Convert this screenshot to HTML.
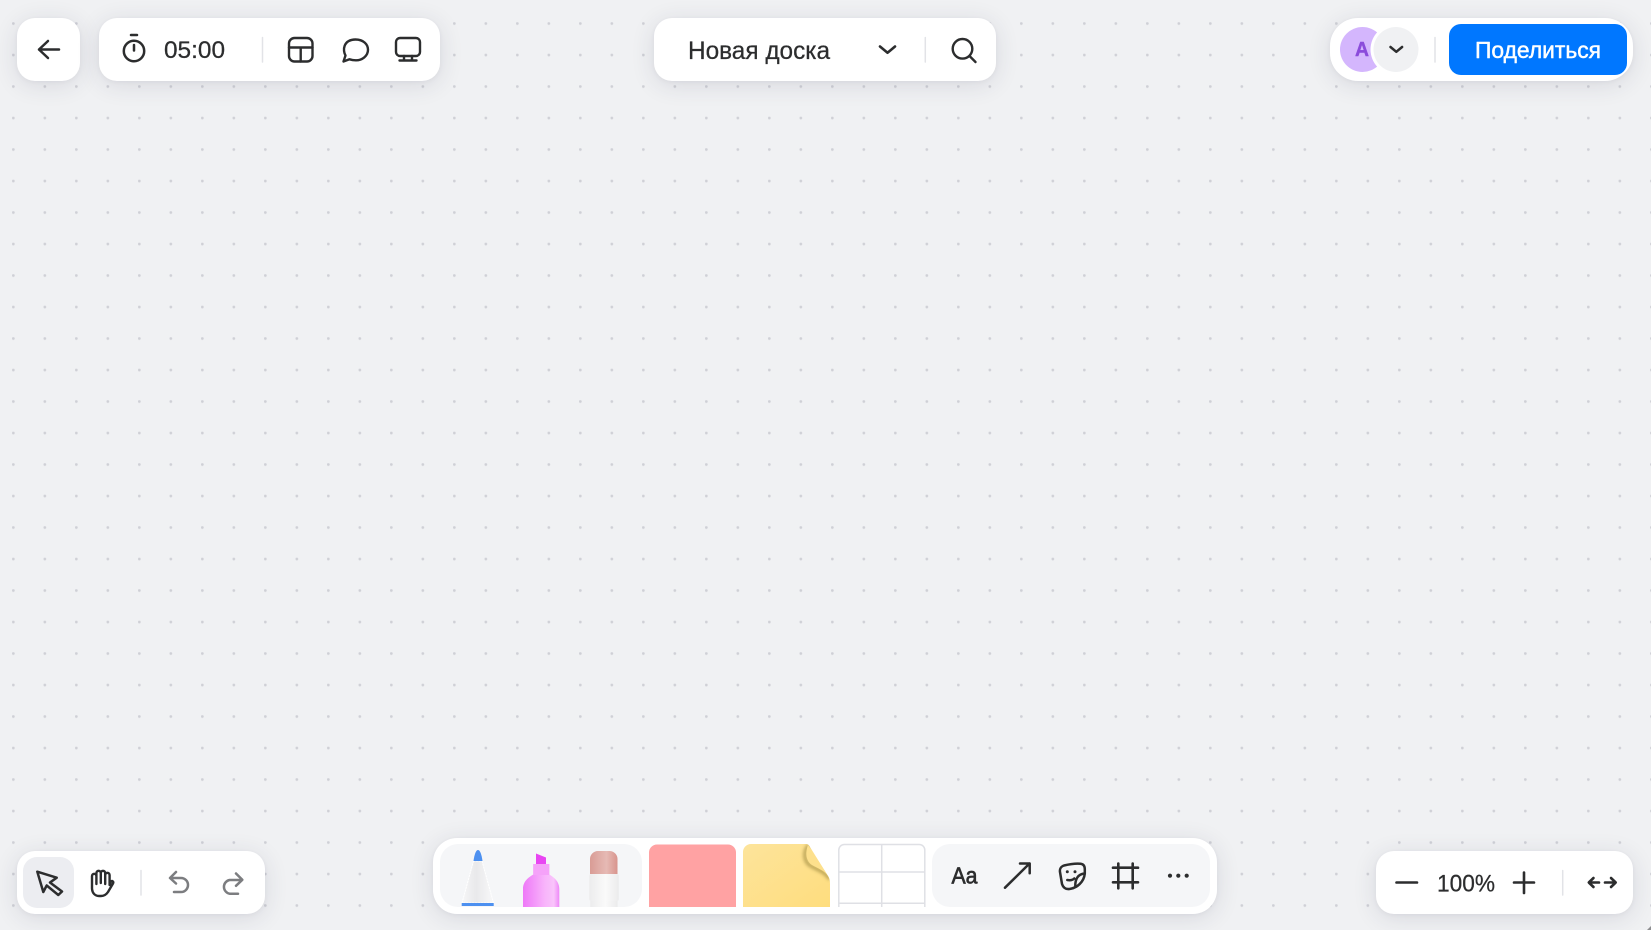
<!DOCTYPE html>
<html lang="ru">
<head>
<meta charset="utf-8">
<title>Новая доска</title>
<style>
html,body{margin:0;padding:0;width:1651px;height:930px;overflow:hidden;background:#f0f1f3;}
.dots{position:absolute;left:0;top:0;width:1651px;height:930px;
background-image:radial-gradient(circle at 1.3px 1.3px,#cfd0d6 0,#cfd0d6 1px,rgba(207,208,214,0) 1.8px);
background-size:31.5px 31.5px;background-position:12px 22.2px;}
.p{position:absolute;background:#fff;box-shadow:0 4px 24px rgba(40,45,75,.12),0 1px 4px rgba(40,45,75,.05);}
svg{position:absolute;left:0;top:0;}
text{font-family:"Liberation Sans",sans-serif;fill:#2c2d2e;stroke:#2c2d2e;stroke-width:.25;}
</style>
</head>
<body>
<div class="dots"></div>
<div class="p" style="left:17px;top:18px;width:63px;height:63px;border-radius:18px"></div>
<div class="p" style="left:99px;top:18px;width:341px;height:63px;border-radius:18px"></div>
<div class="p" style="left:654px;top:18px;width:342px;height:63px;border-radius:18px"></div>
<div class="p" style="left:1330px;top:18px;width:303px;height:63px;border-radius:28px"></div>
<div class="p" style="left:17px;top:851px;width:248px;height:63px;border-radius:18px"></div>
<div class="p" style="left:433px;top:838px;width:784px;height:76px;border-radius:24px"></div>
<div class="p" style="left:1376px;top:851px;width:257px;height:63px;border-radius:18px"></div>
<svg width="1651" height="930" viewBox="0 0 1651 930" xmlns="http://www.w3.org/2000/svg" fill="none" stroke-linecap="round" stroke-linejoin="round">
<defs>
<linearGradient id="cone" x1="0" x2="1" y1="0" y2="0"><stop offset="0" stop-color="#f6f6f7"/><stop offset=".45" stop-color="#e9e9eb"/><stop offset="1" stop-color="#f8f8f9"/></linearGradient>
<linearGradient id="hl" x1="0" x2="1" y1="0" y2="0"><stop offset="0" stop-color="#ee78f8"/><stop offset=".6" stop-color="#f8b4fb"/><stop offset=".85" stop-color="#f9c4fb"/><stop offset="1" stop-color="#ef88f8"/></linearGradient>
<linearGradient id="er" x1="0" x2="1" y1="0" y2="0"><stop offset="0" stop-color="#d99c95"/><stop offset=".6" stop-color="#e6bab5"/><stop offset="1" stop-color="#d8948d"/></linearGradient>
<linearGradient id="wh" x1="0" x2="1" y1="0" y2="0"><stop offset="0" stop-color="#ececed"/><stop offset=".55" stop-color="#fafafa"/><stop offset="1" stop-color="#ebebec"/></linearGradient>
<linearGradient id="ye" x1="0" x2="1" y1="0" y2="1"><stop offset="0" stop-color="#fde49b"/><stop offset="1" stop-color="#fedd7e"/></linearGradient>
<filter id="b" x="-50%" y="-50%" width="200%" height="200%"><feGaussianBlur stdDeviation="1.600"/></filter>
<clipPath id="yc"><path d="M743 907V852a8 8 0 0 1 8-8h55c2 0 3 1 4 3l18 29c1.500 2.500 2 4 2 8v23z"/></clipPath>
</defs>

<!-- back -->
<path d="M59 49.500H39M48 41l-9 8.500 9 8.500" stroke="#2c2d2e" stroke-width="2.500"/>

<!-- timer -->
<g stroke="#2c2d2e" stroke-width="2.500">
<circle cx="134" cy="51" r="10.200"/>
<path d="M131 35h6M134 45v5.500"/>
</g>
<text x="164" y="58" font-size="24" textLength="61" lengthAdjust="spacingAndGlyphs">05:00</text>
<path d="M262.500 37.500v24.500" stroke="#e2e3e7" stroke-width="1.500"/>
<g stroke="#2c2d2e" stroke-width="2.400">
<rect x="289" y="38" width="23.500" height="23.500" rx="5.500"/>
<path d="M289 47.500h23.500M300.700 47.500v14"/>
<path d="M343.500 61.500l2-6c-3-5-2.500-15.800 10-16 8 0 12.500 4.800 12.500 10.300 0 6.300-6 10.500-12 10.500-3 0-5-.5-6.500-1z"/>
<rect x="396" y="38" width="24" height="18" rx="4"/>
<path d="M404 56v4.300M412 56v4.300M399.500 60.500h17"/>
</g>

<!-- title -->
<text x="688" y="59" font-size="25" textLength="142" lengthAdjust="spacingAndGlyphs">Новая доска</text>
<path d="M880 46.500l7.500 6.300 7.500-6.300" stroke="#2c2d2e" stroke-width="2.600"/>
<path d="M925.300 37.500v24.500" stroke="#e2e3e7" stroke-width="1.500"/>
<g stroke="#2c2d2e" stroke-width="2.400">
<circle cx="962.500" cy="48.800" r="9.800"/>
<path d="M970 56.500l5.500 5.500"/>
</g>

<!-- right top -->
<circle cx="1362.500" cy="49.500" r="22.500" fill="#d4b6fd"/>
<text x="1355" y="56" font-size="20" font-weight="700" textLength="14" lengthAdjust="spacingAndGlyphs" style="fill:#8b4bdb;stroke:#8b4bdb;stroke-width:.4">A</text>
<circle cx="1396" cy="49.500" r="25.500" fill="#fff"/>
<circle cx="1396" cy="49.500" r="22.500" fill="#f0f1f3"/>
<path d="M1390.500 47l5.800 4.800 5.800-4.800" stroke="#2c2d2e" stroke-width="2.500"/>
<path d="M1435 37.500v24.500" stroke="#e2e3e7" stroke-width="1.500"/>
<rect x="1449" y="24" width="178" height="51" rx="12" fill="#0077ff"/>
<text x="1475" y="58" font-size="23" textLength="126" lengthAdjust="spacingAndGlyphs" style="fill:#fff;stroke:#fff;stroke-width:.45">Поделиться</text>

<!-- bottom left -->
<rect x="23" y="857" width="51" height="51" rx="14" fill="#ecedf1"/>
<path d="M37.300 871.700L56.700 877.700 50 882.500 62 891.500 58.300 895 46.700 885.500 43.300 892z" stroke="#2c2d2e" stroke-width="2.500"/>
<path d="M92 885V876a2.200 2.200 0 0 1 4.400 0V884M96.400 876V873a2.200 2.200 0 0 1 4.400 0V883M100.800 873a2.200 2.200 0 0 1 4.400 0V884M105.200 875a2.200 2.200 0 0 1 4.400 0V885L111 881.500c1-1 3 0 2 2L108 892c-2 3-4 4-7 4h-2c-4 0-7-3-7-8V885" stroke="#2c2d2e" stroke-width="2.400"/>
<path d="M141 870.500v24.500" stroke="#e2e3e7" stroke-width="1.500"/>
<path d="M176 872l-6 6 6 5.500M170.500 878H181a7 7 0 0 1 0 14h-7" stroke="#7c7d80" stroke-width="2.500"/>
<path d="M236 873.500l6.300 6.300-6.300 6M242 880H229.500a7 7 0 0 0 0 13.700H238" stroke="#7c7d80" stroke-width="2.500"/>

<!-- bottom centre -->
<rect x="440" y="844" width="202" height="63" rx="18" fill="#f5f6f8"/>
<path d="M473.500 861L462 903H493.500L482 861z" fill="url(#cone)" stroke="#fff" stroke-width="1" stroke-dasharray="1.500 1.500"/>
<path d="M473.500 861c.5-4 2-11 4.500-11s4 7 4.500 11z" fill="#4d90f0"/>
<rect x="461.700" y="903" width="32" height="3" fill="#4d90f0"/>
<path d="M523 907V889C523 881 529 877 533.300 874.500V864H549.300V874.500C553.500 877 559.300 881 559.300 889V907z" fill="url(#hl)"/>
<path d="M536 853.500L546 857.500V864H536z" fill="#e846f2"/>
<path d="M533.300 864H549.300V875H533.300z" fill="#f5a2f9"/>
<path d="M590 874V859a8 8 0 0 1 8-8h11.500a8 8 0 0 1 8 8V874z" fill="url(#er)"/>
<rect x="589.300" y="874" width="29.500" height="27" rx="2" fill="url(#wh)"/>
<rect x="590.300" y="901" width="27.300" height="6" fill="url(#wh)"/>

<path d="M649 907V852.500a8 8 0 0 1 8-8h71a8 8 0 0 1 8 8v54.500z" fill="#ffa2a3"/>
<path d="M743 907V852a8 8 0 0 1 8-8h55c2 0 3 1 4 3l18 29c1.500 2.500 2 4 2 8v23z" fill="url(#ye)"/>
<g clip-path="url(#yc)">
<path d="M808 846C803 853 804 862 811 866c6 3.500 13 5 18 12" stroke="#9f8a40" stroke-width="3.500" opacity=".7" filter="url(#b)"/>
<path d="M808 845C805 853 806 861 812 865c6 3.500 12 5 17 12z" fill="#fde08c"/>
</g>

<path d="M838.800 907V850a5.500 5.500 0 0 1 5.500-5.500h75a5.500 5.500 0 0 1 5.500 5.500v57M881.700 844.500V907M838.800 872h86M838.800 903.300h86" stroke="#dfe0e5" stroke-width="1.500" stroke-linecap="butt"/>

<rect x="932" y="844" width="278" height="63" rx="18" fill="#f5f6f8"/>
<text x="951.500" y="883.500" font-size="23" textLength="26" lengthAdjust="spacingAndGlyphs" style="stroke-width:.7">Aa</text>
<path d="M1005 887.700L1029.500 863.500M1020 863.500h9.700v9.700" stroke="#2c2d2e" stroke-width="2.500"/>
<g stroke="#2c2d2e" stroke-width="2.500">
<path d="M1064 865.500C1070 864 1076 863.300 1080.500 863.700C1083.500 864 1084.700 866 1084.800 869V873.500C1084 882 1077 888 1069.500 889C1065 889.500 1063 887 1062 884L1060 872C1059.500 869 1061 866.500 1064 865.500Z"/>
<path d="M1067.300 880c3 .5 5.500 0 7-1.500M1075.300 886.500c-.3-8 3-12.500 9.500-13"/>
</g>
<circle cx="1067.300" cy="871.700" r="1.500" fill="#2c2d2e"/>
<circle cx="1075" cy="871.700" r="1.500" fill="#2c2d2e"/>
<path d="M1118.300 863.500V888.300M1132.700 863.500V888.300M1113 867.700H1138M1113 882.300H1138" stroke="#2c2d2e" stroke-width="2.600"/>
<circle cx="1170" cy="875.700" r="2.100" fill="#2c2d2e"/>
<circle cx="1178.300" cy="875.700" r="2.100" fill="#2c2d2e"/>
<circle cx="1186.700" cy="875.700" r="2.100" fill="#2c2d2e"/>

<!-- bottom right -->
<path d="M1396.500 882.500H1417" stroke="#2c2d2e" stroke-width="2.600"/>
<text x="1437" y="891.500" font-size="24" textLength="58" lengthAdjust="spacingAndGlyphs">100%</text>
<path d="M1514 882.500H1534M1524 872.500V893" stroke="#2c2d2e" stroke-width="2.600"/>
<path d="M1562.700 870.500v24.500" stroke="#e2e3e7" stroke-width="1.500"/>
<path d="M1599 882.500H1590M1593.500 878l-4.700 4.500 4.700 4.500M1605 882.500H1614.500M1611 878l4.700 4.500-4.700 4.500" stroke="#2c2d2e" stroke-width="2.600"/>
<path d="M1651 926V930H1647z" fill="#8d8e90" stroke="none"/>
</svg>
</body>
</html>
